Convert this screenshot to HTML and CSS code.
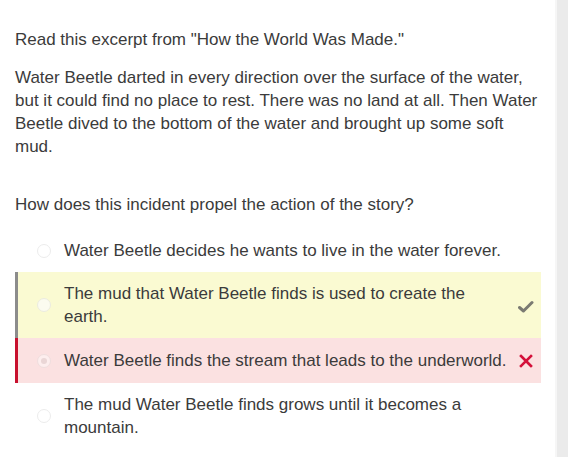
FILE: index.html
```html
<!DOCTYPE html>
<html>
<head>
<meta charset="utf-8">
<link rel="stylesheet" href="styles.css">
</head>
<body>
<div class="page">
  <main class="content">
    <p class="intro">Read this excerpt from "How the World Was Made."</p>
    <p class="excerpt">Water Beetle darted in every direction over the surface of the water, but it could find no place to rest. There was no land at all. Then Water Beetle dived to the bottom of the water and brought up some soft mud.</p>
    <p class="question">How does this incident propel the action of the story?</p>
    <ul class="options">
      <li class="option">
        <span class="radio"></span>
        <span class="label">Water Beetle decides he wants to live in the water forever.</span>
        <span class="mark"></span>
      </li>
      <li class="option correct">
        <span class="radio"></span>
        <span class="label">The mud that Water Beetle finds is used to create the earth.</span>
        <svg class="mark" width="16" height="14" viewBox="0 0 16 14"><path d="M1.5 7.5 L5.5 11 L14 2.5" fill="none" stroke="#7a7a72" stroke-width="3" stroke-linecap="round" stroke-linejoin="round"/></svg>
      </li>
      <li class="option wrong">
        <span class="radio checked"></span>
        <span class="label">Water Beetle finds the stream that leads to the underworld.</span>
        <svg class="mark" width="16" height="14" viewBox="0 0 16 14"><path d="M3 2 L13 12 M13 2 L3 12" fill="none" stroke="#d4103a" stroke-width="2.6" stroke-linecap="square"/></svg>
      </li>
      <li class="option">
        <span class="radio"></span>
        <span class="label">The mud Water Beetle finds grows until it becomes a mountain.</span>
        <span class="mark"></span>
      </li>
    </ul>
  </main>
  <div class="scrollbar"></div>
</div>
</body>
</html>
```
FILE: styles.css
```css
html, body {
  margin: 0;
  padding: 0;
  height: 100%;
  background: #ffffff;
}
.page {
  display: flex;
  height: 457px;
  overflow: hidden;
}
.content {
  flex: 1;
  padding: 28px 14px 0 15px;
  font-family: "Liberation Sans", Arial, sans-serif;
  font-size: 17px;
  line-height: 23px;
  color: #3b3b3b;
}
.content p {
  margin: 0;
}
.intro {
  margin-bottom: 15px !important;
}
.excerpt {
  margin-bottom: 35px !important;
}
.question {
  margin-bottom: 13px !important;
}
.options {
  list-style: none;
  margin: 0;
  padding: 0;
}
.option {
  display: grid;
  grid-template-columns: 14px 1fr 16px;
  align-items: center;
  padding: 10px 7px 10px 19px;
  border-left: 3px solid transparent;
}
.option.correct {
  background: #fafad2;
  border-left-color: #8c8c8c;
}
.option.correct .mark {
  margin-top: 3px;
}
.option.wrong {
  padding-top: 11px;
  padding-bottom: 11px;
  background: #fbe1e1;
  border-left-color: #c8102e;
}
.radio {
  width: 12px;
  height: 12px;
  border: 1px solid #ececec;
  border-radius: 50%;
  background: #ffffff;
  position: relative;
}
.correct .radio {
  background: #fbfbf0;
  border-color: #ebebe0;
}
.wrong .radio {
  background: #fdeeee;
  border-color: #efdede;
}
.radio.checked::after {
  content: "";
  position: absolute;
  left: 3px;
  top: 3px;
  width: 6px;
  height: 6px;
  border-radius: 50%;
  background: #ead6d6;
}
.label {
  margin: 0 10px 0 13px;
}
.mark {
  display: block;
}
.scrollbar {
  flex: none;
  width: 11px;
  background: #ebebeb;
  border-left: 2px solid #f6f6f6;
}
```
